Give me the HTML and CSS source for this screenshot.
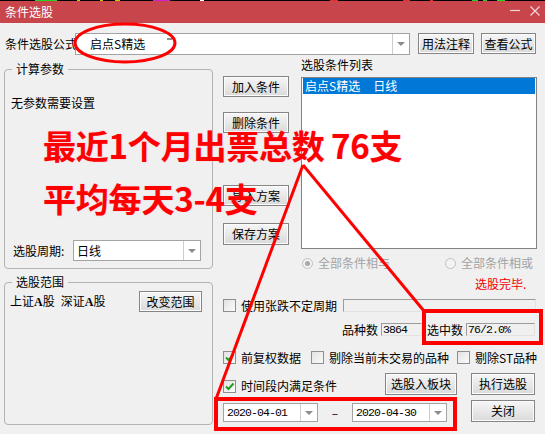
FILE: index.html
```html
<!DOCTYPE html>
<html lang="zh-CN">
<head>
<meta charset="utf-8">
<title>条件选股</title>
<link rel="stylesheet" href="styles.css">
</head>
<body>
<div class="window">
  <div class="chart-strip"></div>
  <header class="titlebar">
    <span class="title">条件选股</span>
    <div class="win-controls">
      <svg class="ctl" width="10" height="9" viewBox="0 0 10 9"><line x1="0" y1="4.5" x2="10" y2="4.5"/></svg>
      <svg class="ctl" width="10" height="10" viewBox="0 0 10 10"><path d="M0.5 0.5 L9.5 9.5 M9.5 0.5 L0.5 9.5"/></svg>
    </div>
  </header>

  <main class="dialog">
    <div class="formula-row">
      <span class="formula-label">条件选股公式</span>
      <div class="combo formula-combo">
        <span class="combo-text">启点S精选</span>
        <span class="combo-btn"><i class="caret"></i></span>
      </div>
      <button class="btn btn-usage">用法注释</button>
      <button class="btn btn-view">查看公式</button>
    </div>

    <div class="main-area">
      <div class="left-col">
        <section class="group group-params">
          <span class="group-title">计算参数</span>
          <p class="no-params">无参数需要设置</p>
          <div class="period-row">
            <span class="period-label">选股周期:</span>
            <div class="combo period-combo">
              <span class="combo-text">日线</span>
              <span class="combo-btn"><i class="caret"></i></span>
            </div>
          </div>
        </section>
        <section class="group group-range">
          <span class="group-title">选股范围</span>
          <div class="range-row">
            <span class="market">上证<b class="latin-a">A</b>股</span>
            <span class="market market-2">深证<b class="latin-a">A</b>股</span>
            <button class="btn btn-range">改变范围</button>
          </div>
        </section>
      </div>

      <div class="right-col">
        <div class="top-split">
          <div class="btn-col">
            <button class="btn btn-add">加入条件</button>
            <button class="btn btn-del">删除条件</button>
            <button class="btn btn-load">导入方案</button>
            <button class="btn btn-save">保存方案</button>
          </div>
          <div class="list-col">
            <div class="list-label">选股条件列表</div>
            <div class="listbox">
              <div class="list-item selected"><span>启点S精选</span><span class="period-tag">日线</span></div>
            </div>
          </div>
        </div>

        <div class="radio-row">
          <span class="radio checked"></span><span class="radio-text">全部条件相与</span>
          <span class="radio radio-or"></span><span class="radio-text">全部条件相或</span>
        </div>

        <div class="status-row"><span class="status">选股完毕.</span></div>

        <div class="check-row">
          <span class="cb"></span><span class="cb-text">使用张跌不定周期</span>
          <span class="field field-wide"></span>
        </div>

        <div class="count-row">
          <span class="count-label">品种数</span>
          <span class="field field-total mono">3864</span>
          <span class="count-label count-label-2">选中数</span>
          <span class="field field-picked mono">76/2.0%</span>
        </div>

        <div class="opts-row">
          <span class="cb checked"><svg viewBox="0 0 11 11"><path d="M2 5.5 L4.5 8 L9.5 2.5"/></svg></span><span class="cb-text">前复权数据</span>
          <span class="cb cb-2"></span><span class="cb-text">剔除当前未交易的品种</span>
          <span class="cb cb-3"></span><span class="cb-text">剔除ST品种</span>
        </div>

        <div class="bottom">
          <div class="bottom-left">
            <div class="time-row">
              <span class="time-check">
                <span class="cb checked"><svg viewBox="0 0 11 11"><path d="M2 5.5 L4.5 8 L9.5 2.5"/></svg></span><span class="cb-text">时间段内满足条件</span>
              </span>
              <button class="btn btn-block">选股入板块</button>
            </div>
            <div class="date-row">
              <div class="combo date-combo"><span class="combo-text mono">2020-04-01</span><span class="combo-btn"><i class="caret"></i></span></div>
              <span class="date-sep">–</span>
              <div class="combo date-combo"><span class="combo-text mono">2020-04-30</span><span class="combo-btn"><i class="caret"></i></span></div>
            </div>
          </div>
          <div class="bottom-right">
            <button class="btn btn-run">执行选股</button>
            <button class="btn btn-close">关闭</button>
          </div>
        </div>
      </div>
    </div>
  </main>

  <!-- hand-drawn markup layer on top of the dialog -->
  <div class="note">
    <div class="note-line">最近1个月出票总数 76支</div>
    <div class="note-line">平均每天3-4支</div>
  </div>
  <svg class="marks" width="545" height="434" viewBox="0 0 545 434">
    <ellipse cx="125" cy="43" rx="50" ry="19"/>
    <line class="tail" x1="167" y1="39" x2="172" y2="39"/>
    <line x1="303" y1="165" x2="216" y2="399"/>
    <line x1="303" y1="165" x2="424" y2="311"/>
    <rect class="box" x="216" y="399" width="239" height="30"/>
    <rect class="box" x="424" y="311" width="117" height="32"/>
  </svg>
</div>
</body>
</html>
```

FILE: styles.css
```css
* { box-sizing: border-box; }

html, body {
  margin: 0;
  padding: 0;
}

body {
  width: 545px;
  height: 434px;
  overflow: hidden;
  background: #f0f0f0;
  font-family: "Noto Sans CJK SC", "Noto Sans", sans-serif;
  font-size: 12px;
  line-height: 14px;
  color: #000;
}

.window {
  position: relative;
  width: 545px;
  height: 434px;
  background: #f0f0f0;
}

/* sliver of the quote chart behind the dialog */
.chart-strip {
  height: 1px;
  background: linear-gradient(to right,
    #000 0 35px, #23d423 35px 57px, #000 57px 77px, #d8c400 77px 80px,
    #000 80px 100px, #d8c400 100px 103px, #000 103px 115px, #d8c400 115px 120px,
    #000 120px 153px, #d21fd2 153px 170px, #000 170px 200px, #fff 200px 204px,
    #000 204px 330px, #e03030 330px 338px, #000 338px 403px, #e03030 403px 410px,
    #000 410px 430px, #e03030 430px 433px, #000 433px 472px, #23d423 472px 478px,
    #000 478px 483px, #23d423 483px 487px, #000 487px 497px, #23d423 497px 505px,
    #000 505px);
}

.titlebar {
  height: 22px;
  background: #c8464b;
  display: flex;
  align-items: center;
  padding-left: 5px;
  color: #fff;
}

.title { flex: 1; }

.win-controls {
  display: flex;
  align-items: flex-start;
  align-self: flex-start;
  gap: 10px;
  margin-top: 5px;
  margin-right: 5px;
}

.ctl {
  stroke: rgba(255, 255, 255, 0.78);
  stroke-width: 1.2;
  fill: none;
}

.dialog {
  height: 411px;
}

/* shared controls */
.btn {
  font: inherit;
  color: #000;
  height: 21px;
  padding: 0;
  border: 1px solid #858585;
  border-radius: 0;
  background: linear-gradient(#f6f6f6, #e8e8e8 50%, #dadada);
  box-shadow: inset 0 0 0 1px #fcfcfc;
  display: flex;
  align-items: center;
  justify-content: center;
  white-space: nowrap;
}

.combo {
  display: flex;
  height: 22px;
  border: 1px solid #a3a3a3;
  background: #fff;
}

.combo-text {
  flex: 1;
  display: flex;
  align-items: center;
  white-space: nowrap;
}

.combo-btn {
  width: 17px;
  border-left: 1px solid #cdcdcd;
  display: flex;
  align-items: center;
  justify-content: center;
}

.caret {
  width: 0;
  height: 0;
  border-left: 4px solid transparent;
  border-right: 4px solid transparent;
  border-top: 4px solid #8c8c8c;
}

.mono {
  font-family: "Liberation Mono", "DejaVu Sans Mono", monospace;
  font-size: 11.5px;
  letter-spacing: -0.9px;
}

.cb {
  width: 13px;
  height: 13px;
  flex: none;
  border: 1px solid #8e8e8e;
  background: linear-gradient(135deg, #e2e2e2, #fbfbfb);
  display: inline-flex;
}

.cb svg {
  width: 11px;
  height: 11px;
  fill: none;
  stroke: #1f9e1f;
  stroke-width: 2;
}

.cb-text {
  margin-left: 5px;
  white-space: nowrap;
}

.field {
  display: flex;
  align-items: center;
  background: #f0f0f0;
  border: 1px solid;
  border-color: #9c9c9c #e2e2e2 #e2e2e2 #9c9c9c;
}

/* formula row */
.formula-row {
  display: flex;
  align-items: flex-start;
  height: 22px;
  margin-top: 10px;
  padding-left: 5px;
}

.formula-label {
  width: 70px;
  line-height: 22px;
  white-space: nowrap;
}

.formula-combo { width: 335px; }
.formula-combo .combo-text { padding-left: 14px; }

.btn-usage { width: 56px; margin-left: 8px; }
.btn-view { width: 55px; margin-left: 7px; }

/* main two-column area */
.main-area {
  display: flex;
  padding-left: 4px;
}

.left-col {
  width: 209px;
  display: flex;
  flex-direction: column;
}

.group {
  position: relative;
  border: 1px solid #b4b4b4;
  border-radius: 4px;
  display: flex;
  flex-direction: column;
}

.group-title {
  position: absolute;
  top: -9px;
  left: 7px;
  padding: 0 4px;
  line-height: 16px;
  background: #f0f0f0;
  white-space: nowrap;
}

.group-params {
  margin-top: 14px;
  height: 200px;
}

.no-params {
  margin: 26px 0 0 6px;
}

.period-row {
  display: flex;
  align-items: center;
  margin-top: auto;
  margin-bottom: 7px;
  padding-left: 8px;
}

.period-label {
  width: 60px;
  white-space: nowrap;
}

.period-combo {
  width: 128px;
  height: 21px;
}

.period-combo .combo-text { padding-left: 3px; }

.group-range {
  margin-top: 13px;
  height: 143px;
}

.range-row {
  display: flex;
  align-items: center;
  margin-top: 8px;
  padding-left: 5px;
}

.market { white-space: nowrap; }
.market-2 { margin-left: 6px; }

.latin-a {
  font-family: "Liberation Serif", serif;
  font-weight: bold;
  font-size: 12px;
}

.btn-range {
  width: 63px;
  margin-left: auto;
  margin-right: 10px;
}

/* right column */
.right-col {
  width: 314px;
  margin-left: 10px;
  display: flex;
  flex-direction: column;
}

.top-split { display: flex; }

.btn-col {
  width: 66px;
  display: flex;
  flex-direction: column;
}

.btn-col .btn { width: 66px; }
.btn-add { margin-top: 21px; }
.btn-del { margin-top: 15px; }
.btn-load { margin-top: 52px; }
.btn-save { margin-top: 17px; height: 22px; }

.list-col {
  width: 236px;
  margin-left: 12px;
}

.list-label {
  margin-top: 3px;
  height: 14px;
}

.listbox {
  margin-top: 5px;
  height: 172px;
  border: 1px solid #828282;
  background: #fff;
  padding: 0 1px;
}

.list-item {
  height: 16px;
  line-height: 16px;
  padding-left: 2px;
  white-space: nowrap;
}

.list-item.selected {
  background: #0078d7;
  color: #fff;
}

.period-tag { margin-left: 13px; }

.radio-row {
  display: flex;
  align-items: center;
  height: 14px;
  margin-top: 7px;
  padding-left: 79px;
  color: #a3a3a3;
}

.radio {
  width: 11px;
  height: 11px;
  flex: none;
  border-radius: 50%;
  border: 1px solid #c0c0c0;
  background: #f3f3f3;
  display: flex;
  align-items: center;
  justify-content: center;
}

.radio.checked::after {
  content: "";
  width: 5px;
  height: 5px;
  border-radius: 50%;
  background: #a8a8a8;
}

.radio-text {
  margin-left: 5px;
  white-space: nowrap;
}

.radio-or { margin-left: 55px; }

.status-row {
  height: 14px;
  margin-top: 7px;
  padding-left: 252px;
}

.status {
  color: #f00000;
  white-space: nowrap;
}

.check-row {
  display: flex;
  align-items: center;
  height: 13px;
  margin-top: 8px;
}

.field-wide {
  width: 193px;
  height: 13px;
  margin-left: auto;
  margin-right: 1px;
}

.count-row {
  display: flex;
  align-items: center;
  height: 13px;
  margin-top: 11px;
  padding-left: 119px;
}

.count-label { white-space: nowrap; }
.count-label-2 { margin-left: 5px; }

.field-total,
.field-picked {
  height: 13px;
  margin-left: 3px;
  padding-left: 1px;
}

.field-total { width: 41px; }
.field-picked { width: 69px; }

.opts-row {
  display: flex;
  align-items: center;
  height: 13px;
  margin-top: 15px;
}

.cb-2 { margin-left: 10px; }
.cb-3 { margin-left: 8px; }

.bottom {
  display: flex;
  margin-top: 9px;
}

.bottom-left {
  width: 234px;
  display: flex;
  flex-direction: column;
}

.time-row {
  display: flex;
  align-items: flex-start;
  height: 22px;
}

.time-check {
  display: flex;
  align-items: center;
  margin-top: 6px;
}

.btn-block {
  width: 72px;
  height: 22px;
  margin-left: auto;
}

.date-row {
  display: flex;
  align-items: center;
  margin-top: 8px;
}

.date-combo {
  width: 95px;
  height: 19px;
}

.date-combo .combo-text { padding-left: 3px; }

.date-sep {
  width: 34px;
  text-align: center;
}

.bottom-right {
  width: 64px;
  margin-left: 14px;
  display: flex;
  flex-direction: column;
}

.btn-run { height: 22px; }
.btn-close { height: 22px; margin-top: 5px; }

/* red markup drawn over the dialog */
.note {
  position: absolute;
  left: 43px;
  top: 119px;
  color: #ff0000;
  font-size: 33px;
  font-weight: bold;
  line-height: 53px;
  white-space: nowrap;
  letter-spacing: -0.2px;
  word-spacing: -1px;
  text-shadow: 0 0 1px rgba(255, 60, 140, 0.5);
}

.marks {
  position: absolute;
  left: 0;
  top: 0;
  pointer-events: none;
}

.marks ellipse,
.marks line,
.marks rect {
  fill: none;
  stroke: #ff0000;
  stroke-width: 3;
}

.marks .box { stroke-width: 4; }

.marks .tail {
  stroke: #222;
  stroke-width: 1;
}
```
